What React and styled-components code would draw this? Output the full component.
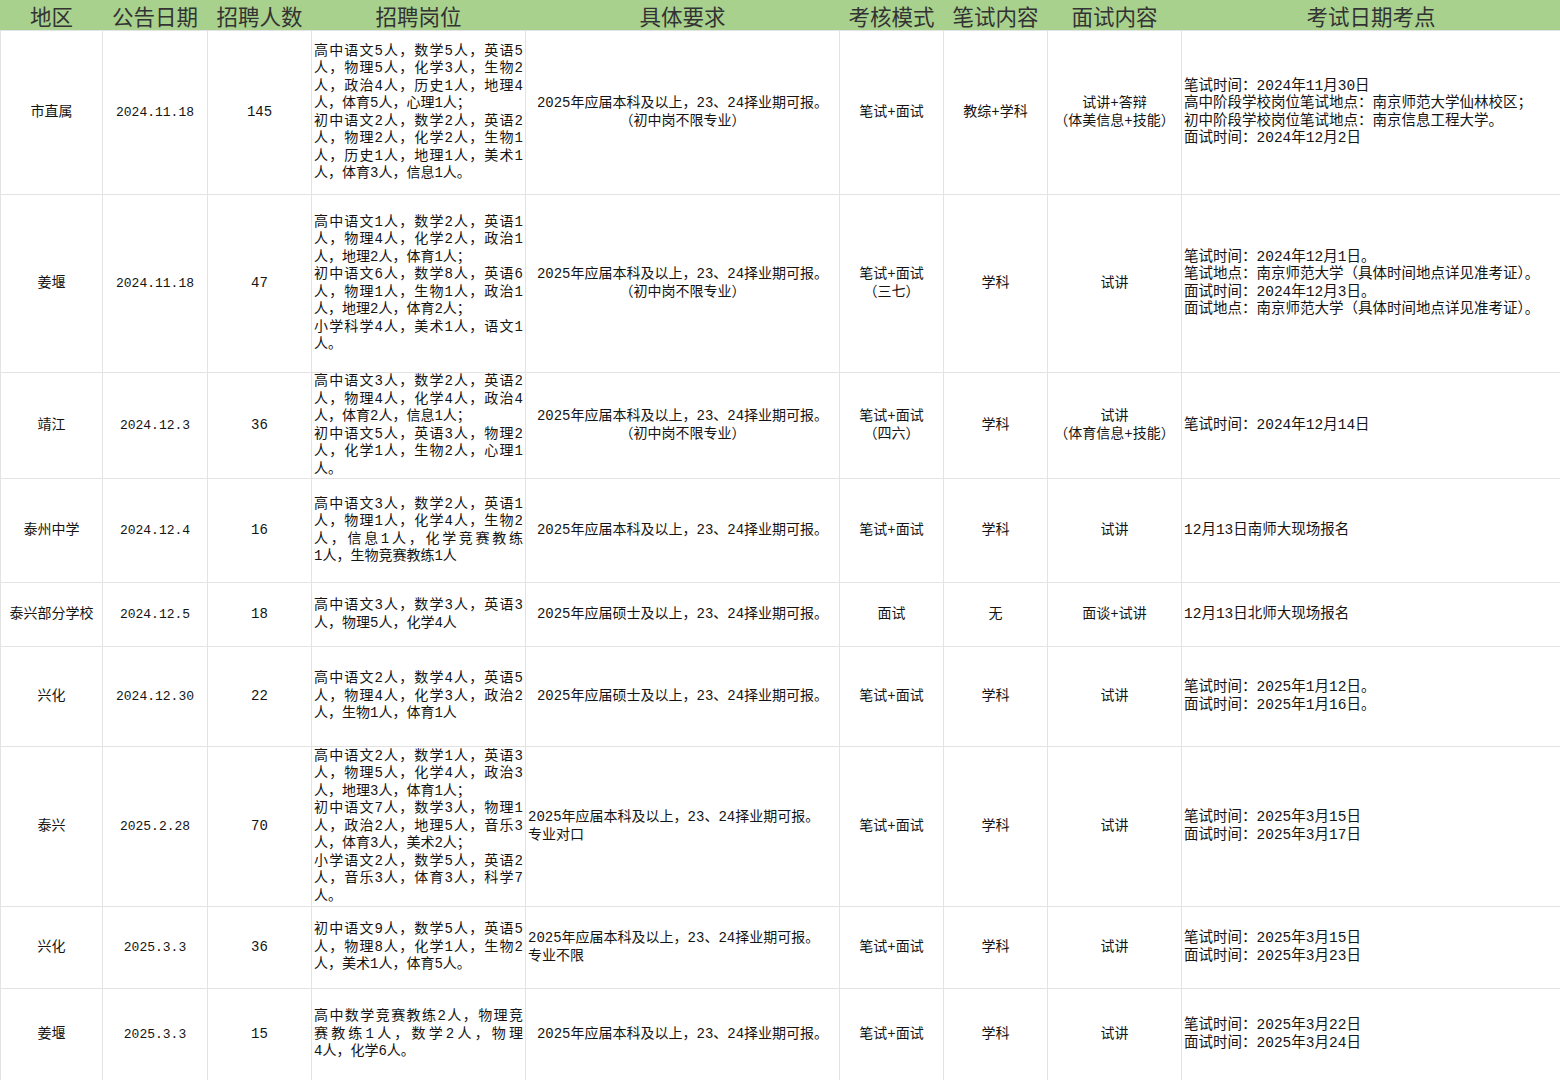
import styled, { createGlobalStyle } from 'styled-components';

const GlobalStyle = createGlobalStyle`
    body {
        margin: 0;
        background: #FFFFFF;
        font-family: "Liberation Mono", "Noto Sans CJK SC", monospace;
    }
`;

const COLUMNS = [102, 105, 104, 214, 314, 104, 104, 134, 379];
const HEADERS = ['地区', '公告日期', '招聘人数', '招聘岗位', '具体要求', '考核模式', '笔试内容', '面试内容', '考试日期考点'];

const ROWS = [
    {
        h: 164, area: '市直属', date: '2024.11.18', count: '145',
        jobs: [
            '高中语文5人，数学5人，英语5', '人，物理5人，化学3人，生物2', '人，政治4人，历史1人，地理4', '人，体育5人，心理1人；',
            '初中语文2人，数学2人，英语2', '人，物理2人，化学2人，生物1', '人，历史1人，地理1人，美术1', '人，体育3人，信息1人。',
        ],
        req: ['2025年应届本科及以上，23、24择业期可报。', '（初中岗不限专业）'],
        mode: ['笔试+面试'], written: '教综+学科', interview: ['试讲+答辩', '（体美信息+技能）'],
        exam: ['笔试时间：2024年11月30日', '高中阶段学校岗位笔试地点：南京师范大学仙林校区；', '初中阶段学校岗位笔试地点：南京信息工程大学。', '面试时间：2024年12月2日'],
    },
    {
        h: 178, area: '姜堰', date: '2024.11.18', count: '47',
        jobs: [
            '高中语文1人，数学2人，英语1', '人，物理4人，化学2人，政治1', '人，地理2人，体育1人；',
            '初中语文6人，数学8人，英语6', '人，物理1人，生物1人，政治1', '人，地理2人，体育2人；',
            '小学科学4人，美术1人，语文1', '人。',
        ],
        req: ['2025年应届本科及以上，23、24择业期可报。', '（初中岗不限专业）'],
        mode: ['笔试+面试', '（三七）'], written: '学科', interview: ['试讲'],
        exam: ['笔试时间：2024年12月1日。', '笔试地点：南京师范大学（具体时间地点详见准考证）。', '面试时间：2024年12月3日。', '面试地点：南京师范大学（具体时间地点详见准考证）。'],
    },
    {
        h: 106, area: '靖江', date: '2024.12.3', count: '36',
        jobs: [
            '高中语文3人，数学2人，英语2', '人，物理4人，化学4人，政治4', '人，体育2人，信息1人；',
            '初中语文5人，英语3人，物理2', '人，化学1人，生物2人，心理1', '人。',
        ],
        req: ['2025年应届本科及以上，23、24择业期可报。', '（初中岗不限专业）'],
        mode: ['笔试+面试', '（四六）'], written: '学科', interview: ['试讲', '（体育信息+技能）'],
        exam: ['笔试时间：2024年12月14日'],
    },
    {
        h: 104, area: '泰州中学', date: '2024.12.4', count: '16',
        jobs: ['高中语文3人，数学2人，英语1', '人，物理1人，化学4人，生物2', '人，信息1人，化学竞赛教练', '1人，生物竞赛教练1人'],
        req: ['2025年应届本科及以上，23、24择业期可报。'],
        mode: ['笔试+面试'], written: '学科', interview: ['试讲'],
        exam: ['12月13日南师大现场报名'],
    },
    {
        h: 64, area: '泰兴部分学校', date: '2024.12.5', count: '18',
        jobs: ['高中语文3人，数学3人，英语3', '人，物理5人，化学4人'],
        req: ['2025年应届硕士及以上，23、24择业期可报。'],
        mode: ['面试'], written: '无', interview: ['面谈+试讲'],
        exam: ['12月13日北师大现场报名'],
    },
    {
        h: 100, area: '兴化', date: '2024.12.30', count: '22',
        jobs: ['高中语文2人，数学4人，英语5', '人，物理4人，化学3人，政治2', '人，生物1人，体育1人'],
        req: ['2025年应届硕士及以上，23、24择业期可报。'],
        mode: ['笔试+面试'], written: '学科', interview: ['试讲'],
        exam: ['笔试时间：2025年1月12日。', '面试时间：2025年1月16日。'],
    },
    {
        h: 160, area: '泰兴', date: '2025.2.28', count: '70',
        jobs: [
            '高中语文2人，数学1人，英语3', '人，物理5人，化学4人，政治3', '人，地理3人，体育1人；',
            '初中语文7人，数学3人，物理1', '人，政治2人，地理5人，音乐3', '人，体育3人，美术2人；',
            '小学语文2人，数学5人，英语2', '人，音乐3人，体育3人，科学7', '人。',
        ],
        req: ['2025年应届本科及以上，23、24择业期可报。', '专业对口'], reqLeft: true,
        mode: ['笔试+面试'], written: '学科', interview: ['试讲'],
        exam: ['笔试时间：2025年3月15日', '面试时间：2025年3月17日'],
    },
    {
        h: 82, area: '兴化', date: '2025.3.3', count: '36',
        jobs: ['初中语文9人，数学5人，英语5', '人，物理8人，化学1人，生物2', '人，美术1人，体育5人。'],
        req: ['2025年应届本科及以上，23、24择业期可报。', '专业不限'], reqLeft: true,
        mode: ['笔试+面试'], written: '学科', interview: ['试讲'],
        exam: ['笔试时间：2025年3月15日', '面试时间：2025年3月23日'],
    },
    {
        h: 92, area: '姜堰', date: '2025.3.3', count: '15',
        jobs: ['高中数学竞赛教练2人，物理竞', '赛教练1人，数学2人，物理', '4人，化学6人。'],
        req: ['2025年应届本科及以上，23、24择业期可报。'],
        mode: ['笔试+面试'], written: '学科', interview: ['试讲'],
        exam: ['笔试时间：2025年3月22日', '面试时间：2025年3月24日'],
    },
];

const Sheet = styled.table`
    width: 1560px;
    table-layout: fixed;
    border-collapse: collapse;
    color: #141414;
`;

const HeadCell = styled.th`
    height: 29px;
    padding: 0;
    border: 1px solid #A9D18E;
    border-bottom-color: #E3E3E3;
    background: #A9D18E;

    font-family: "Noto Sans CJK SC", sans-serif;
    font-weight: normal;
    font-size: 21.5px;
    line-height: 27px;
    text-align: center;
    color: #333333;
`;

const Row = styled.tr`
    height: ${p => p.$h}px;
`;

const Cell = styled.td`
    padding: 0 2px;
    border: 1px solid #E3E3E3;
    vertical-align: middle;
    text-align: ${p => p.$align || 'center'};

    font-size: ${p => p.$size || 14}px;
    line-height: 17.5px;
    white-space: nowrap;
    overflow: hidden;
`;

const Line = styled.span`
    display: block;
    text-align: ${p => p.$justify ? 'justify' : 'inherit'};
    text-align-last: ${p => p.$justify ? 'justify' : 'auto'};
`;

const Lines = ({ items }) => items.map((text, i) => <Line key={i}>{text}</Line>);

const JobLines = ({ items }) => items.map((text, i) => (
    <Line key={i} $justify={i < items.length - 1 && !text.endsWith('；')}>{text}</Line>
));

export default function App() {
    return (
        <>
            <GlobalStyle />
            <Sheet>
                <colgroup>
                    {COLUMNS.map((w, i) => <col key={i} style={{ width: w }} />)}
                </colgroup>
                <thead>
                    <tr>
                        {HEADERS.map(h => <HeadCell key={h}>{h}</HeadCell>)}
                    </tr>
                </thead>
                <tbody>
                    {ROWS.map((r, i) => (
                        <Row key={i} $h={r.h}>
                            <Cell>{r.area}</Cell>
                            <Cell $size={13}>{r.date}</Cell>
                            <Cell>{r.count}</Cell>
                            <Cell $align="left"><JobLines items={r.jobs} /></Cell>
                            <Cell $align={r.reqLeft ? 'left' : 'center'}><Lines items={r.req} /></Cell>
                            <Cell><Lines items={r.mode} /></Cell>
                            <Cell>{r.written}</Cell>
                            <Cell><Lines items={r.interview} /></Cell>
                            <Cell $align="left" $size={14.5}><Lines items={r.exam} /></Cell>
                        </Row>
                    ))}
                </tbody>
            </Sheet>
        </>
    );
}
